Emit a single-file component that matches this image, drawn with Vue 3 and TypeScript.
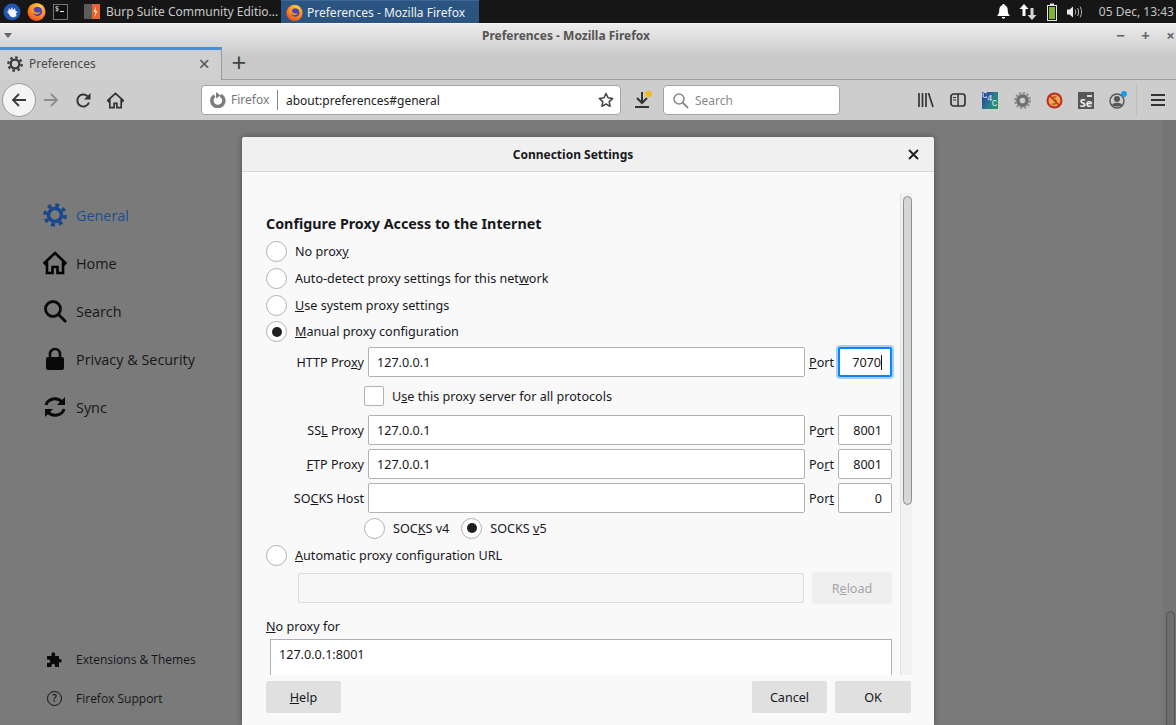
<template>
  <div class="screen">
    <!-- desktop panel -->
    <div class="panel">
      <div class="launchers">
        <svg class="launcher" width="18" height="18" viewBox="0 0 18 18">
          <circle cx="9" cy="9" r="8.500" fill="#1f56b0" />
          <path d="M3 8l2 1 1-4 1.500 2 1.500-3 1 3 2-2 .5 3 2.500 1-2 1 .5 3-3 1.500-3-1-2-3z" fill="#f2f5fb" />
        </svg>
        <svg class="launcher" width="19" height="19" viewBox="0 0 20 20">
          <defs>
            <radialGradient id="ffBody" cx="0.65" cy="0.2" r="1">
              <stop offset="0" stop-color="#ffd23a" />
              <stop offset="0.5" stop-color="#ff8a1f" />
              <stop offset="1" stop-color="#e0302c" />
            </radialGradient>
          </defs>
          <circle cx="10" cy="10.500" r="9.500" fill="url(#ffBody)" />
          <circle cx="11" cy="10" r="5" fill="#4f43b0" />
          <path d="M5 5c-1 3 0 6 3 7.500 2.500 1 5 0 6-2-1.500 1-4 1-5.500 0-1.500-1-2-3-1-4.500-1 0-2 0-2.500-1z" fill="#ff9a1e" />
        </svg>
        <div class="term-icon">
          <span class="term-dollar">$</span><span class="term-dash"></span>
        </div>
      </div>
      <div class="task">
        <svg width="16" height="17" viewBox="0 0 16 17">
          <rect x="0" y="1" width="8" height="15" fill="#5b5b5b" />
          <rect x="8" y="1" width="8" height="15" fill="#e8622c" />
          <path d="M12 3l-2.500 6h2l-1 5 3-6h-2z" fill="#f6e3d8" />
        </svg>
        <span>Burp Suite Community Editio...</span>
      </div>
      <div class="task task-active">
        <svg width="17" height="17" viewBox="0 0 20 20">
          <circle cx="10" cy="10.500" r="9.500" fill="url(#ffBody)" />
          <circle cx="11" cy="10" r="5" fill="#4f43b0" />
          <path d="M5 5c-1 3 0 6 3 7.500 2.500 1 5 0 6-2-1.500 1-4 1-5.500 0-1.500-1-2-3-1-4.500-1 0-2 0-2.500-1z" fill="#ff9a1e" />
        </svg>
        <span>Preferences - Mozilla Firefox</span>
      </div>
      <div class="tray">
        <svg width="13" height="15" viewBox="0 0 13 15">
          <path d="M6.500 0c.8 0 1.200.6 1.200 1.200C10 2 10.800 4 10.800 6.500c0 2.500.7 3.800 2.200 5.500H0c1.500-1.700 2.200-3 2.200-5.500C2.200 4 3 2 5.300 1.200 5.300.6 5.700 0 6.500 0z" fill="#fff" />
          <path d="M4.800 13h3.400a1.700 1.700 0 0 1-3.400 0z" fill="#fff" />
        </svg>
        <svg width="18" height="18" viewBox="0 0 18 18">
          <path d="M5 1l4.500 5H6.500v7h-3V6H.5z" fill="#fff" />
          <path d="M13 17l-4.500-5h3V5h3v7h3z" fill="#d6d6d6" />
        </svg>
        <svg width="10" height="18" viewBox="0 0 10 18">
          <rect x="3" y="0.500" width="4" height="2" fill="#e8e8e8" />
          <rect x="0.500" y="2.500" width="9" height="15" fill="#151515" stroke="#e8e8e8" />
          <rect x="2" y="4" width="6" height="12" fill="#7fb23a" />
        </svg>
        <svg width="16" height="14" viewBox="0 0 16 14">
          <path d="M0 4.500h2.500L6 1.500v11l-3.500-3H0z" fill="#e8e8e8" />
          <path d="M8 4.500c1 1.500 1 3.500 0 5M10.500 3c1.500 2.500 1.500 5.500 0 8M13 1.500c2 3.500 2 7.500 0 11" fill="none" stroke="#b8b8b8" stroke-width="1" />
        </svg>
        <span class="clock">05 Dec, 13:43</span>
      </div>
    </div>

    <!-- title bar and tabs -->
    <div class="chrome-top">
      <div class="titlebar">
        <span class="menu-arrow"></span>
        <span class="window-title">Preferences - Mozilla Firefox</span>
        <div class="window-btns">
          <span>&minus;</span><span>+</span><span>&times;</span>
        </div>
      </div>
      <div class="tabstrip">
        <div class="tab">
          <svg width="16" height="16" viewBox="0 0 24 24">
            <circle cx="12" cy="12" r="6.500" fill="none" stroke="#3a3a3a" stroke-width="3.500" />
            <circle cx="12" cy="12" r="10" fill="none" stroke="#3a3a3a" stroke-width="3.500" stroke-dasharray="3.850 4" />
          </svg>
          <span class="tab-label">Preferences</span>
          <span class="tab-close">&times;</span>
        </div>
        <span class="new-tab">+</span>
      </div>
    </div>

    <!-- navigation toolbar -->
    <div class="navbar">
      <div class="back-btn">
        <svg width="18" height="18" viewBox="0 0 18 18">
          <path d="M16 9H3M9 3L3 9l6 6" fill="none" stroke="#3a3a3a" stroke-width="1.800" />
        </svg>
      </div>
      <div class="nav-slot">
        <svg width="18" height="18" viewBox="0 0 18 18">
          <path d="M2 9h13M9 3l6 6-6 6" fill="none" stroke="#8d8d8d" stroke-width="1.800" />
        </svg>
      </div>
      <div class="nav-slot">
        <svg width="17" height="17" viewBox="0 0 17 17">
          <path d="M14 10.500A6 6 0 1 1 12.500 4.200" fill="none" stroke="#333" stroke-width="2" />
          <path d="M15.500 1v6.500H9z" fill="#333" />
        </svg>
      </div>
      <div class="nav-slot">
        <svg width="17" height="17" viewBox="0 0 24 24">
          <path d="M1 12L12 2l11 10-1.500 1.500L20 12v10h-6v-6h-4v6H4V12l-1.500 1.500z" fill="none" stroke="#333" stroke-width="2.400" />
        </svg>
      </div>
      <div class="urlbar">
        <svg width="16" height="16" viewBox="0 0 16 16">
          <path d="M10.500 3.200A6 6 0 1 1 4.500 3.600" fill="none" stroke="#7d7d7d" stroke-width="3.500" />
          <path d="M6 0l4.500 3.500L6 6.500z" fill="#7d7d7d" />
        </svg>
        <span class="identity">Firefox</span>
        <span class="url">about:preferences#general</span>
        <svg class="star" width="16" height="16" viewBox="0 0 16 16">
          <path d="M8 1.500l2 4.300 4.700.6-3.500 3.200.9 4.700L8 12l-4.100 2.300.9-4.700L1.300 6.400 6 5.800z" fill="none" stroke="#444" stroke-width="1.500" stroke-linejoin="round" />
        </svg>
      </div>
      <div class="nav-slot download">
        <svg width="20" height="22" viewBox="0 0 20 22">
          <path d="M10 3v11M5 9l5 5 5-5" fill="none" stroke="#333" stroke-width="2" />
          <rect x="3" y="17" width="14" height="2" fill="#333" />
          <circle cx="16.500" cy="5" r="3.300" fill="#f5b922" />
        </svg>
      </div>
      <div class="searchbar">
        <svg width="17" height="17" viewBox="0 0 17 17">
          <circle cx="7" cy="7" r="5" fill="none" stroke="#8a8a8a" stroke-width="1.600" />
          <path d="M10.500 10.500L16 16" stroke="#8a8a8a" stroke-width="1.800" />
        </svg>
        <span>Search</span>
      </div>
      <div class="toolbar-right">
        <div class="nav-slot">
          <svg width="16" height="16" viewBox="0 0 16 16">
            <path d="M1 1v14M4.500 1v14M8 1v14M10.500 1l4.500 14" fill="none" stroke="#333" stroke-width="1.700" />
          </svg>
        </div>
        <div class="nav-slot">
          <svg width="16" height="16" viewBox="0 0 16 16">
            <rect x="1" y="2" width="14" height="12" rx="2.500" fill="none" stroke="#333" stroke-width="1.700" />
            <path d="M8 2v12" stroke="#333" stroke-width="1.500" />
            <path d="M3 5.500h3M3 8h3" stroke="#333" />
          </svg>
        </div>
        <div class="nav-slot">
          <div class="c4c"><span>C</span><span class="c4c-mid">4</span><span class="c4c-end">C</span></div>
        </div>
        <div class="nav-slot">
          <svg width="17" height="17" viewBox="0 0 24 24">
            <circle cx="12" cy="12" r="6.500" fill="none" stroke="#6f6f6f" stroke-width="5" />
            <circle cx="12" cy="12" r="10.500" fill="none" stroke="#8e8e8e" stroke-width="3" stroke-dasharray="3.300 2.200" />
          </svg>
        </div>
        <div class="nav-slot">
          <svg width="17" height="17" viewBox="0 0 17 17">
            <circle cx="8.500" cy="8.500" r="7" fill="#eba555" stroke="#c22a20" stroke-width="2" />
            <path d="M6 12c2 1 5-.5 4-3-.5-1.500-3-1-3-3 0-1 2-1.500 3-.5" fill="none" stroke="#b8651c" stroke-width="1.800" />
            <path d="M3.500 3.500l10 10" stroke="#c22a20" stroke-width="1.500" />
          </svg>
        </div>
        <div class="nav-slot">
          <div class="se-icon"><span class="se-bar"></span><span>Se</span></div>
        </div>
        <div class="nav-slot account">
          <svg width="20" height="20" viewBox="0 0 20 20">
            <circle cx="9" cy="11" r="7" fill="none" stroke="#555" stroke-width="1.400" />
            <circle cx="9" cy="9" r="3" fill="#555" />
            <path d="M4 15c1-3 9-3 10 0-2 2-8 2-10 0z" fill="#555" />
            <circle cx="16" cy="4" r="3" fill="#1e9be8" />
          </svg>
        </div>
      </div>
      <span class="toolbar-sep"></span>
      <div class="nav-slot">
        <svg width="16" height="14" viewBox="0 0 16 14">
          <path d="M1 2h14M1 7h14M1 12h14" stroke="#333" stroke-width="1.800" />
        </svg>
      </div>
    </div>

    <!-- dimmed preferences page -->
    <div class="page">
      <div class="sidebar">
        <div v-for="item in navItems" :key="item.label" class="side-item" :class="{ selected: item.selected }">
          <svg width="24" height="24" viewBox="0 0 24 24" class="side-icon">
            <template v-if="item.icon === 'gear'">
              <circle cx="12" cy="12" r="6.500" fill="none" stroke="#17488c" stroke-width="3.500" />
              <circle cx="12" cy="12" r="10" fill="none" stroke="#17488c" stroke-width="3.500" stroke-dasharray="3.850 4" />
            </template>
            <path v-else-if="item.icon === 'home'" d="M1.500 12L12 2l10.500 10-1.500 1.500-1-1V22h-5.500v-6h-5v6H4v-9.500l-1 1z" fill="none" stroke="#000" stroke-width="2.600" />
            <template v-else-if="item.icon === 'search'">
              <circle cx="10" cy="10" r="7.500" fill="none" stroke="#0a0a0a" stroke-width="2.800" />
              <path d="M15.500 15.500l7.500 7.500" stroke="#0a0a0a" stroke-width="2.800" />
            </template>
            <template v-else-if="item.icon === 'lock'">
              <path d="M7 11V7a5 5 0 0 1 10 0v4" fill="none" stroke="#0a0a0a" stroke-width="2.600" />
              <rect x="3" y="10" width="18" height="13" rx="2" fill="#0a0a0a" />
            </template>
            <template v-else>
              <path d="M3 10a9 8 0 0 1 16-3" fill="none" stroke="#0a0a0a" stroke-width="3" />
              <path d="M21 14a9 8 0 0 1-16 3" fill="none" stroke="#0a0a0a" stroke-width="3" />
              <path d="M22 2v8h-8zM2 22v-8h8z" fill="#0a0a0a" />
            </template>
          </svg>
          <span>{{ item.label }}</span>
        </div>
        <div class="side-bottom">
          <div class="side-link">
            <span class="link-icon">
              <svg width="15" height="15" viewBox="0 0 15 15">
                <path d="M0 4h4.500V2a1.800 1.800 0 0 1 3.600 0v2H12v3h1a1.800 1.800 0 0 1 0 3.600h-1V15H8v-1.500a1.800 1.800 0 0 0-3.600 0V15H0v-4h1.500a1.800 1.800 0 0 0 0-3.600H0z" fill="#0a0a0a" />
              </svg>
            </span>
            <span>Extensions &amp; Themes</span>
          </div>
          <div class="side-link">
            <span class="link-icon"><span class="help-circle">?</span></span>
            <span>Firefox Support</span>
          </div>
        </div>
      </div>
      <div class="page-scroll"><span class="page-thumb"></span></div>
    </div>

    <!-- proxy dialog -->
    <div class="dialog">
      <div class="dialog-head">
        <span class="dialog-title">Connection Settings</span>
        <svg class="dialog-close" width="11" height="11" viewBox="0 0 11 11">
          <path d="M1 1l9 9M10 1l-9 9" stroke="#222" stroke-width="2" />
        </svg>
      </div>
      <div class="dialog-body">
        <div class="form">
          <h2 class="form-title">Configure Proxy Access to the Internet</h2>
          <label class="radio-row"><span class="radio"></span><span>No prox<u>y</u></span></label>
          <label class="radio-row"><span class="radio"></span><span>Auto-detect proxy settings for this net<u>w</u>ork</span></label>
          <label class="radio-row"><span class="radio"></span><span><u>U</u>se system proxy settings</span></label>
          <label class="radio-row short"><span class="radio on"></span><span><u>M</u>anual proxy configuration</span></label>

          <div class="proxy-grid">
            <span class="lbl">HTTP Pro<u>x</u>y</span>
            <div class="field">127.0.0.1</div>
            <span class="port-lbl"><u>P</u>ort</span>
            <div class="field port focused">7070<span class="caret"></span></div>

            <label class="check-row"><span class="check"></span><span>U<u>s</u>e this proxy server for all protocols</span></label>

            <span class="lbl">SS<u>L</u> Proxy</span>
            <div class="field">127.0.0.1</div>
            <span class="port-lbl">P<u>o</u>rt</span>
            <div class="field port">8001</div>

            <span class="lbl"><u>F</u>TP Proxy</span>
            <div class="field">127.0.0.1</div>
            <span class="port-lbl">Po<u>r</u>t</span>
            <div class="field port">8001</div>

            <span class="lbl">SO<u>C</u>KS Host</span>
            <div class="field"></div>
            <span class="port-lbl">Por<u>t</u></span>
            <div class="field port">0</div>
          </div>

          <div class="socks-row">
            <label class="socks-opt"><span class="radio"></span><span>SOC<u>K</u>S v4</span></label>
            <label class="socks-opt"><span class="radio on"></span><span>SOCKS <u>v</u>5</span></label>
          </div>

          <label class="radio-row auto-row"><span class="radio"></span><span><u>A</u>utomatic proxy configuration URL</span></label>
          <div class="auto-url">
            <div class="field disabled"></div>
            <div class="btn btn-disabled">R<u>e</u>load</div>
          </div>

          <div class="noproxy-lbl"><u>N</u>o proxy for</div>
          <div class="textarea">127.0.0.1:8001</div>
        </div>
        <div class="scroll-track"><span class="scroll-thumb"></span></div>
      </div>
      <div class="dialog-foot">
        <div class="btn"><u>H</u>elp</div>
        <div class="foot-right">
          <div class="btn">Cancel</div>
          <div class="btn btn-ok">OK</div>
        </div>
      </div>
    </div>
  </div>
</template>

<script setup lang="ts">
interface NavItem {
  label: string;
  icon: string;
  selected?: boolean;
}

const navItems: NavItem[] = [
  { label: 'General', icon: 'gear', selected: true },
  { label: 'Home', icon: 'home' },
  { label: 'Search', icon: 'search' },
  { label: 'Privacy & Security', icon: 'lock' },
  { label: 'Sync', icon: 'sync' },
];
</script>

<style>
html, body { margin: 0; background: #7a7a7a; }
</style>

<style scoped>
.screen {
  width: 1176px; height: 725px; position: relative; overflow: hidden;
  display: flex; flex-direction: column;
  font-family: "Noto Sans", "Open Sans", sans-serif; color: #0c0c0d;
}

/* panel */
.panel { height: 23px; background: #161616; display: flex; align-items: stretch; color: #c9c9c9; font-size: 12px; flex: none; }
.launchers { width: 84px; display: flex; align-items: center; padding-left: 3px; box-sizing: border-box; flex: none; }
.launcher { margin-right: 6px; flex: none; }
.launcher + .launcher { margin-right: 7px; }
.term-icon { width: 15px; height: 16px; border: 1px solid #777; background: #111; position: relative; display: flex; align-items: flex-start; color: #eee; font-size: 7px; line-height: 8px; padding-left: 1px; box-sizing: border-box; }
.term-dash { display: block; width: 4px; height: 1px; background: #eee; margin: 6px 0 0 1px; }
.task { width: 197px; display: flex; align-items: center; gap: 6px; white-space: nowrap; box-sizing: border-box; flex: none; }
.task-active { background: #2b5480; color: #eef2f6; padding-left: 5px; gap: 4px; border-top: 1px solid #3a6796; width: 198px; }
.tray { margin-left: auto; display: flex; align-items: center; gap: 0; padding-right: 2px; }
.tray svg:nth-child(1) { margin-right: 9px; }
.tray svg:nth-child(2) { margin-right: 10px; }
.tray svg:nth-child(3) { margin-right: 10px; }
.tray svg:nth-child(4) { margin-right: 16px; }
.clock { color: #c4c4c4; font-size: 12px; }

/* title and tabs */
.chrome-top { height: 57px; flex: none; background: linear-gradient(#ececec, #c9c9c9 60%, #cacaca); border-top: 1px solid #f5f5f5; box-sizing: border-box; }
.titlebar { height: 23px; display: flex; align-items: center; position: relative; }
.menu-arrow { width: 0; height: 0; border: 4px solid transparent; border-top: 5px solid #666; border-bottom: 0; margin-left: 4px; flex: none; }
.window-title { flex: 1; text-align: center; font-size: 12px; font-weight: 700; color: #555; padding-left: 12px; }
.window-btns { display: flex; width: 68px; flex: none; color: #666; font-size: 15px; font-weight: 700; line-height: 15px; }
.window-btns span { width: 25px; flex: none; text-align: center; }
.tabstrip { height: 33px; display: flex; align-items: stretch; }
.tab { width: 222px; box-sizing: border-box; border-top: 3px solid #4a90d9; background: #d0d0d0; border-right: 1px solid #9c9c9c; display: flex; align-items: center; padding: 0 11px 3px 7px; gap: 6px; font-size: 12px; color: #4a4a4a; }
.tab-label { flex: 1; }
.tab-close { font-size: 20px; line-height: 20px; color: #555; }
.new-tab { width: 34px; text-align: center; font-size: 26px; line-height: 30px; color: #444; font-weight: 400; border-bottom: 1px solid #9c9c9c; }
.tabstrip::after { content: ""; flex: 1; border-bottom: 1px solid #9c9c9c; }

/* navbar */
.navbar { height: 40px; flex: none; background: #cdcdcd; display: flex; align-items: center; padding-left: 2px; box-sizing: border-box; }
.nav-slot { width: 32px; height: 32px; display: flex; align-items: center; justify-content: center; flex: none; }
.back-btn { width: 32px; height: 32px; border-radius: 50%; border: 1px solid #9b9b9b; background: #f4f4f4; display: flex; align-items: center; justify-content: center; margin-right: -1px; flex: none; }
.urlbar, .searchbar { height: 30px; box-sizing: border-box; background: #fff; border: 1px solid #a3a3a3; border-radius: 4px; display: flex; align-items: center; font-size: 12px; flex: none; }
.urlbar { width: 420px; margin-left: 70px; padding-left: 8px; }
.identity { margin-left: 5px; color: #777; width: 46px; height: 20px; line-height: 20px; border-right: 1px solid #888; flex: none; }
.url { margin-left: 8px; color: #222; flex: 1; }
.star { margin-right: 6px; }
.download { margin-left: 5px; }
.searchbar { width: 177px; margin-left: 5px; padding-left: 8px; gap: 6px; color: #8a8a8a; }
.toolbar-right { display: flex; margin-left: 70px; }
.toolbar-sep { width: 1px; height: 30px; background: #bdbdbd; margin: 0 5px 0 2px; }
.c4c { width: 16px; height: 17px; background: linear-gradient(120deg, #27309d, #2a7d8f 55%, #1f9a55); color: #dfeaff; font-family: "Liberation Mono", monospace; font-size: 9px; line-height: 9px; display: flex; letter-spacing: -0.5px; }
.c4c-mid { margin-top: 3px; }
.c4c-end { margin-top: 8px; }
.se-icon { width: 16px; height: 17px; background: #575757; color: #eee; font-size: 11px; font-weight: 700; line-height: 10px; display: flex; flex-direction: column; align-items: center; justify-content: flex-end; padding-bottom: 1px; box-sizing: border-box; position: relative; }
.se-bar { width: 5px; height: 2px; background: #ddd; align-self: flex-end; margin: 0 2px 1px 0; }

/* page */
.page { flex: 1; background: #7a7a7a; display: flex; min-height: 0; }
.sidebar { flex: 1; display: flex; flex-direction: column; padding: 71px 0 7px 43px; font-family: "Open Sans", sans-serif; color: #17171a; }
.side-item { height: 48px; display: flex; align-items: center; gap: 9px; font-size: 14.400px; }
.side-icon { flex: none; }
.selected { color: #1a4f8f; }
.side-bottom { margin-top: auto; }
.side-link { height: 39px; display: flex; align-items: center; font-size: 12px; }
.link-icon { width: 33px; display: flex; justify-content: flex-start; padding-left: 4px; box-sizing: border-box; }
.help-circle { width: 13px; height: 13px; border: 1.500px solid #111; border-radius: 50%; font-size: 10px; line-height: 13px; text-align: center; font-weight: 600; }
.page-scroll { width: 13px; background: #757575; position: relative; flex: none; }
.page-thumb { display: block; width: 9px; margin: 491px 0 0 3px; height: 200px; box-sizing: border-box; border: 1px solid #555; border-radius: 5px 5px 0 0; background: #6e6e6e; }

/* dialog */
.dialog {
  position: absolute; left: 242px; top: 137px; width: 692px; height: 588px;
  background: #f9f9fa; border-radius: 3px 3px 0 0; box-shadow: 0 0 6px rgba(0, 0, 0, 0.35);
  display: flex; flex-direction: column; font-size: 12.600px; color: #18181a;
}
.dialog-head { height: 35px; flex: none; box-sizing: border-box; border-bottom: 1px solid #d7d7d7; background: #f0f0f1; display: flex; align-items: center; padding: 0 15px 0 6px; border-radius: 3px 3px 0 0; }
.dialog-title { flex: 1; text-align: center; font-size: 12px; font-weight: 700; padding-right: 10px; }
.dialog-close { flex: none; }
.dialog-body { height: 503px; flex: none; overflow: hidden; display: flex; padding-left: 24px; box-sizing: border-box; }
.form { width: 626px; flex: none; }
.form-title { margin: 42px 0 4px; font-size: 14.300px; line-height: 20px; font-weight: 700; }
.radio-row { height: 27px; display: flex; align-items: center; gap: 8px; }
.radio-row.short { height: 25px; }
.radio { width: 21px; height: 21px; box-sizing: border-box; flex: none; border-radius: 50%; border: 1px solid #b1b1b3; background: #fff; position: relative; display: flex; align-items: center; justify-content: center; }
.radio.on::after { content: ""; width: 10px; height: 10px; border-radius: 50%; background: #202023; }
.proxy-grid { display: grid; grid-template-columns: 98px 437px 25px 54px; column-gap: 4px; row-gap: 4px; grid-auto-rows: 30px; margin-top: 3px; align-items: center; }
.lbl { text-align: right; white-space: nowrap; }
.port-lbl { white-space: nowrap; }
.field { height: 30px; box-sizing: border-box; border: 1px solid #b1b1b3; background: #fff; border-radius: 2px; padding: 0 8px; line-height: 29px; font-size: 12.600px; }
.field.port { text-align: right; padding-right: 9px; position: relative; }
.field.focused { border: 2px solid #0a84ff; box-shadow: 0 0 0 2px rgba(10, 132, 255, 0.35); line-height: 27px; padding-right: 8px; }
.caret { display: inline-block; width: 1px; height: 15px; background: #111; vertical-align: -3px; }
.check-row { grid-column: 1 / -1; display: flex; align-items: center; gap: 8px; padding-left: 98px; }
.check { width: 20px; height: 20px; flex: none; box-sizing: border-box; border: 1px solid #b1b1b3; background: #fff; border-radius: 2px; }
.socks-row { display: flex; height: 22px; margin-top: 4px; padding-left: 98px; }
.socks-opt { display: flex; align-items: center; gap: 8px; margin-right: 12px; }
.auto-row { margin-top: 5px; height: 22px; }
.auto-url { display: flex; align-items: center; gap: 8px; padding-left: 32px; margin-top: 6px; }
.field.disabled { width: 506px; flex: none; background: #f7f7f8; border-color: #dcdcdd; }
.btn { width: 75px; height: 32px; box-sizing: border-box; background: #e0e0e1; border-radius: 2px; display: flex; align-items: center; justify-content: center; white-space: pre; }
.btn-ok { width: 76px; }
.btn-disabled { width: 80px; background: #efeff0; color: #a5a5a6; }
.noproxy-lbl { margin-top: 14px; line-height: 18px; }
.textarea { margin: 3px 0 0 4px; width: 622px; height: 70px; box-sizing: border-box; border: 1px solid #b1b1b3; background: #fff; padding: 5px 8px; line-height: 20px; }
.scroll-track { width: 12px; margin: 21px 0 0 8px; flex: none; background: #f1f1f2; border-left: 1px solid #e2e2e3; box-sizing: border-box; padding: 3px 0 0 2px; }
.scroll-thumb { display: block; width: 9px; height: 309px; box-sizing: border-box; background: #d6d6d7; border: 1px solid #8f8f90; border-radius: 5px; }
.dialog-foot { flex: 1; display: flex; justify-content: space-between; align-items: flex-start; padding: 6px 23px 0 24px; }
.foot-right { display: flex; gap: 8px; }
</style>
